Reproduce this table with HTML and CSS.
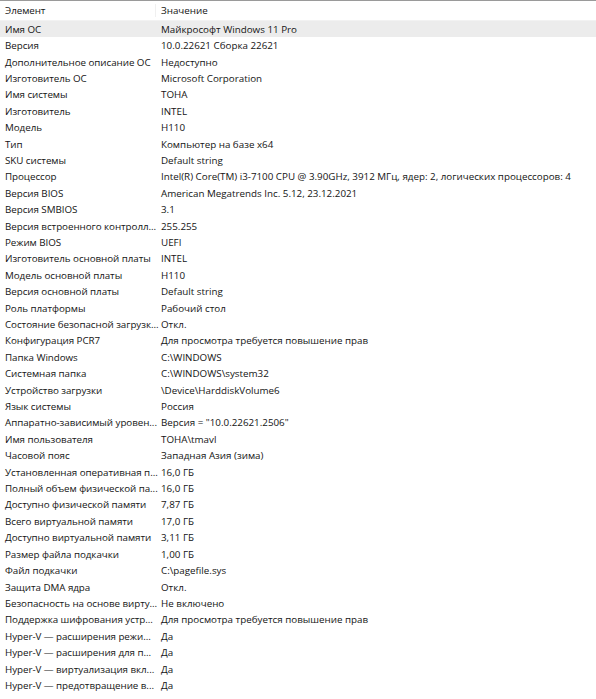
FILE: index.html
```html
<!DOCTYPE html>
<html lang="ru">
<head>
<meta charset="utf-8">
<link rel="stylesheet" href="styles.css">
</head>
<body>
<div class="list">
  <div class="row header"><div class="name">Элемент</div><div class="value">Значение</div></div>
  <div class="row selected"><div class="name">Имя ОС</div><div class="value">Майкрософт Windows 11 Pro</div></div>
  <div class="row"><div class="name">Версия</div><div class="value">10.0.22621 Сборка 22621</div></div>
  <div class="row"><div class="name">Дополнительное описание ОС</div><div class="value">Недоступно</div></div>
  <div class="row"><div class="name">Изготовитель ОС</div><div class="value">Microsoft Corporation</div></div>
  <div class="row"><div class="name">Имя системы</div><div class="value">TOHA</div></div>
  <div class="row"><div class="name">Изготовитель</div><div class="value">INTEL</div></div>
  <div class="row"><div class="name">Модель</div><div class="value">H110</div></div>
  <div class="row"><div class="name">Тип</div><div class="value">Компьютер на базе x64</div></div>
  <div class="row"><div class="name">SKU системы</div><div class="value">Default string</div></div>
  <div class="row"><div class="name">Процессор</div><div class="value">Intel(R) Core(TM) i3-7100 CPU @ 3.90GHz, 3912 МГц, ядер: 2, логических процессоров: 4</div></div>
  <div class="row"><div class="name">Версия BIOS</div><div class="value">American Megatrends Inc. 5.12, 23.12.2021</div></div>
  <div class="row"><div class="name">Версия SMBIOS</div><div class="value">3.1</div></div>
  <div class="row"><div class="name">Версия встроенного контролл...</div><div class="value">255.255</div></div>
  <div class="row"><div class="name">Режим BIOS</div><div class="value">UEFI</div></div>
  <div class="row"><div class="name">Изготовитель основной платы</div><div class="value">INTEL</div></div>
  <div class="row"><div class="name">Модель основной платы</div><div class="value">H110</div></div>
  <div class="row"><div class="name">Версия основной платы</div><div class="value">Default string</div></div>
  <div class="row"><div class="name">Роль платформы</div><div class="value">Рабочий стол</div></div>
  <div class="row"><div class="name">Состояние безопасной загрузк...</div><div class="value">Откл.</div></div>
  <div class="row"><div class="name">Конфигурация PCR7</div><div class="value">Для просмотра требуется повышение прав</div></div>
  <div class="row"><div class="name">Папка Windows</div><div class="value">C:\WINDOWS</div></div>
  <div class="row"><div class="name">Системная папка</div><div class="value">C:\WINDOWS\system32</div></div>
  <div class="row"><div class="name">Устройство загрузки</div><div class="value">\Device\HarddiskVolume6</div></div>
  <div class="row"><div class="name">Язык системы</div><div class="value">Россия</div></div>
  <div class="row"><div class="name">Аппаратно-зависимый уровен...</div><div class="value">Версия = "10.0.22621.2506"</div></div>
  <div class="row"><div class="name">Имя пользователя</div><div class="value">TOHA\tmavl</div></div>
  <div class="row"><div class="name">Часовой пояс</div><div class="value">Западная Азия (зима)</div></div>
  <div class="row"><div class="name">Установленная оперативная п...</div><div class="value">16,0 ГБ</div></div>
  <div class="row"><div class="name">Полный объем физической па...</div><div class="value">16,0 ГБ</div></div>
  <div class="row"><div class="name">Доступно физической памяти</div><div class="value">7,87 ГБ</div></div>
  <div class="row"><div class="name">Всего виртуальной памяти</div><div class="value">17,0 ГБ</div></div>
  <div class="row"><div class="name">Доступно виртуальной памяти</div><div class="value">3,11 ГБ</div></div>
  <div class="row"><div class="name">Размер файла подкачки</div><div class="value">1,00 ГБ</div></div>
  <div class="row"><div class="name">Файл подкачки</div><div class="value">C:\pagefile.sys</div></div>
  <div class="row"><div class="name">Защита DMA ядра</div><div class="value">Откл.</div></div>
  <div class="row"><div class="name">Безопасность на основе вирту...</div><div class="value">Не включено</div></div>
  <div class="row"><div class="name">Поддержка шифрования устр...</div><div class="value">Для просмотра требуется повышение прав</div></div>
  <div class="row"><div class="name">Hyper-V — расширения режи...</div><div class="value">Да</div></div>
  <div class="row"><div class="name">Hyper-V — расширения для п...</div><div class="value">Да</div></div>
  <div class="row"><div class="name">Hyper-V — виртуализация вкл...</div><div class="value">Да</div></div>
  <div class="row"><div class="name">Hyper-V — предотвращение в...</div><div class="value">Да</div></div>
</div>
</body>
</html>
```
FILE: styles.css
```css
html, body {
  margin: 0;
  padding: 0;
  background: #ffffff;
}
body {
  font-family: "Open Sans", "Noto Sans", sans-serif;
  font-size: 9.8px;
  color: #141414;
  width: 596px;
  height: 699px;
  overflow: hidden;
}
.list {
  border-top: 1px solid #9a9a9a;
  display: flex;
  flex-direction: column;
}
.row {
  display: flex;
  align-items: center;
  height: 16.42px;
  white-space: nowrap;
}
.row.header {
  height: 19px;
  border-bottom: 1px solid #f2f2f2;
}
.row.header .name {
  border-right: 1px solid #f0f0f0;
}
.row.selected {
  background: #ececec;
}
.name {
  width: 156px;
  padding-left: 5px;
  box-sizing: border-box;
  flex: none;
  letter-spacing: -0.05px;
}
.value {
  padding-left: 5px;
}
```
